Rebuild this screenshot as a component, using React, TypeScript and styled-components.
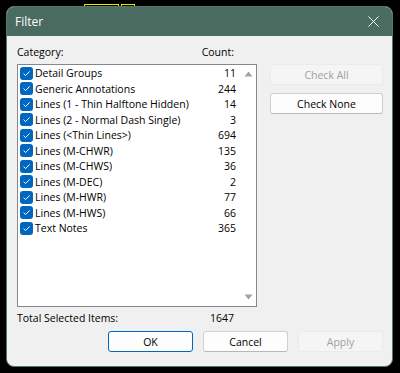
import React from "react";
import styled, { createGlobalStyle } from "styled-components";

const GlobalStyle = createGlobalStyle`
  html, body { margin: 0; padding: 0; background: #000; }
  body { font-family: "Open Sans", "Noto Sans", "Liberation Sans", sans-serif; }
  * { box-sizing: border-box; }
`;

const Stage = styled.div`
  position: relative;
  width: 400px;
  height: 373px;
  padding: 6px 7px 6px 6px;
  background: #000;
  overflow: hidden;
`;

const Backdrop = styled.div`
  position: absolute;
  left: 84px;
  top: 4px;
  display: flex;
  gap: 2px;
  align-items: flex-start;
`;

const Mark = styled.div<{ $w: number }>`
  width: ${(p) => p.$w}px;
  height: 3px;
  border-top: 1px solid #e8e800;
  border-left: 1px solid #e8e800;
  border-right: 1px solid #e8e800;
`;

const Window = styled.div`
  position: relative;
  width: 387px;
  height: 361px;
  border-radius: 8px;
  overflow: hidden;
  background: #f0f0f0;
  border: 1px solid #56786b;
  display: flex;
  flex-direction: column;
`;

const TitleBar = styled.div`
  height: 29px;
  background: #4a6b5f;
  display: flex;
  align-items: center;
  justify-content: space-between;
  padding: 0 9px 0 8px;
  color: #fff;
  font-size: 12px;
`;

const CloseIcon = styled.svg`
  width: 11px;
  height: 11px;
  margin-right: 4px;
`;

const Body = styled.div`
  flex: 1;
  display: flex;
  flex-direction: column;
  padding: 8px 9px 14px 10px;
  font-size: 10.5px;
  color: #000;
`;

const Main = styled.div`
  display: flex;
  gap: 13px;
`;

const LeftCol = styled.div`
  width: 240px;
  display: flex;
  flex-direction: column;
`;

const HeaderRow = styled.div`
  display: flex;
  justify-content: space-between;
  padding-right: 23px;
  height: 20px;
  line-height: 16px;
`;

const ListBox = styled.div`
  height: 243px;
  background: #fff;
  border: 1px solid #828790;
  display: flex;
`;

const Rows = styled.div`
  flex: 1;
  padding-top: 0.5px;
`;

const Row = styled.div`
  height: 15.5px;
  display: flex;
  align-items: center;
  padding: 0 4px 0 2px;
`;

const Check = styled.span`
  width: 13px;
  height: 13px;
  border-radius: 3px;
  background: #0067c0;
  display: inline-flex;
  align-items: center;
  justify-content: center;
  margin-right: 2px;
  flex: none;
`;

const Name = styled.span`
  flex: 1;
  white-space: nowrap;
`;

const Count = styled.span`
  text-align: right;
`;

const ScrollBar = styled.div`
  width: 16px;
  display: flex;
  flex-direction: column;
  justify-content: space-between;
  align-items: center;
  padding: 6px 0 6px 0;
`;

const Arrow = styled.svg`
  width: 9px;
  height: 6px;
`;

const TotalRow = styled.div`
  display: flex;
  justify-content: space-between;
  padding-right: 23px;
  margin-top: 3px;
  line-height: 16px;
`;

const RightCol = styled.div`
  flex: 1;
  display: flex;
  flex-direction: column;
  gap: 8px;
  padding-top: 20px;
`;

const Button = styled.button<{ $disabled?: boolean; $default?: boolean }>`
  height: 21px;
  font-family: inherit;
  font-size: 10.5px;
  border-radius: 3px;
  padding: 0;
  color: ${(p) => (p.$disabled ? "#a0a0a0" : "#000")};
  background: ${(p) => (p.$disabled ? "#f5f5f5" : "#fdfdfd")};
  border: 1px solid
    ${(p) => (p.$default ? "#0067c0" : p.$disabled ? "#ebebeb" : "#d0d0d0")};
  border-bottom-color: ${(p) =>
    p.$default ? "#0067c0" : p.$disabled ? "#ebebeb" : "#b8b8b8"};
`;

const Footer = styled.div`
  margin-top: auto;
  display: flex;
  justify-content: flex-end;
  gap: 10px;
`;

const FooterButton = styled(Button)`
  width: 85px;
`;

const items: [string, number][] = [
  ["Detail Groups", 11],
  ["Generic Annotations", 244],
  ["Lines (1 - Thin Halftone Hidden)", 14],
  ["Lines (2 - Normal Dash Single)", 3],
  ["Lines (<Thin Lines>)", 694],
  ["Lines (M-CHWR)", 135],
  ["Lines (M-CHWS)", 36],
  ["Lines (M-DEC)", 2],
  ["Lines (M-HWR)", 77],
  ["Lines (M-HWS)", 66],
  ["Text Notes", 365],
];

const CheckMark = () => (
  <svg width="9" height="9" viewBox="0 0 9 9">
    <path d="M1.6 4.6 L3.6 6.6 L7.6 2.4" fill="none" stroke="#fff" strokeWidth="1" />
  </svg>
);

export default function App() {
  return (
    <>
      <GlobalStyle />
      <Stage>
        <Backdrop>
          <Mark $w={35} />
          <Mark $w={14} />
        </Backdrop>
        <Window>
          <TitleBar>
            <span>Filter</span>
            <CloseIcon viewBox="0 0 11 11">
              <path d="M0.5 0.5 L10.5 10.5 M10.5 0.5 L0.5 10.5" stroke="#fff" strokeWidth="1" />
            </CloseIcon>
          </TitleBar>
          <Body>
            <Main>
              <LeftCol>
                <HeaderRow>
                  <span>Category:</span>
                  <span>Count:</span>
                </HeaderRow>
                <ListBox>
                  <Rows>
                    {items.map(([n, c]) => (
                      <Row key={n}>
                        <Check>
                          <CheckMark />
                        </Check>
                        <Name>{n}</Name>
                        <Count>{c}</Count>
                      </Row>
                    ))}
                  </Rows>
                  <ScrollBar>
                    <Arrow viewBox="0 0 9 6">
                      <path d="M4.5 0.5 L8.5 5.5 L0.5 5.5 Z" fill="#a3a3a3" />
                    </Arrow>
                    <Arrow viewBox="0 0 9 6">
                      <path d="M0.5 0.5 L8.5 0.5 L4.5 5.5 Z" fill="#a3a3a3" />
                    </Arrow>
                  </ScrollBar>
                </ListBox>
                <TotalRow>
                  <span>Total Selected Items:</span>
                  <span>1647</span>
                </TotalRow>
              </LeftCol>
              <RightCol>
                <Button $disabled>Check All</Button>
                <Button>Check None</Button>
              </RightCol>
            </Main>
            <Footer>
              <FooterButton $default>OK</FooterButton>
              <FooterButton>Cancel</FooterButton>
              <FooterButton $disabled>Apply</FooterButton>
            </Footer>
          </Body>
        </Window>
      </Stage>
    </>
  );
}
